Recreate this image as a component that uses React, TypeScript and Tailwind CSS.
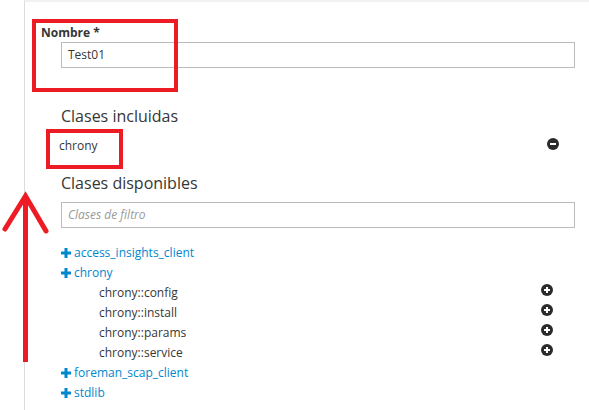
import React from "react";

const font = { fontFamily: '"Open Sans", "Liberation Sans", sans-serif' };

function PlusGlyph() {
  return (
    <svg width="10" height="10" viewBox="0 0 10 10" className="shrink-0">
      <rect x="3.5" y="0" width="3" height="10" fill="#0088ce" />
      <rect x="0" y="3.5" width="10" height="3" fill="#0088ce" />
    </svg>
  );
}

function CircleIcon({ minus }: { minus?: boolean }) {
  return (
    <svg width="12" height="12" viewBox="0 0 12 12">
      <circle cx="6" cy="6" r="6" fill="#2b2b2b" />
      <rect x="3" y="5" width="6" height="2" fill="#fff" />
      {!minus && <rect x="5" y="3" width="2" height="6" fill="#fff" />}
    </svg>
  );
}

// árbol de clases disponibles
const available: { name: string; children?: string[] }[] = [
  { name: "access_insights_client" },
  {
    name: "chrony",
    children: ["chrony::config", "chrony::install", "chrony::params", "chrony::service"],
  },
  { name: "foreman_scap_client" },
  { name: "stdlib" },
];

export default function App() {
  return (
    <div
      className="relative w-[589px] h-[410px] overflow-hidden bg-white text-[#363636]"
      style={font}
    >
      <div className="ml-[24px] h-full border-l border-[#dcdcdc] border-t-2 border-t-[#f1f1f1] pr-[14px]">
        {/* Nombre */}
        <div className="pl-[16px] pt-[22px] text-[12px] font-bold leading-[17px]">Nombre *</div>
        <div className="ml-[36px] mt-[1px] h-[26px] border border-[#bbb] px-[6px] text-[12px] leading-[24px]">
          Test01
        </div>

        {/* Clases incluidas */}
        <h3 className="ml-[36px] mt-[37px] text-[16px] leading-[22px]">Clases incluidas</h3>
        <div className="ml-[34px] mt-[10px] flex items-start justify-between text-[12px] leading-[18px]">
          <span>chrony</span>
          <span className="mr-[16px] mt-[1px] flex">
            <CircleIcon minus />
          </span>
        </div>

        {/* Clases disponibles */}
        <h3 className="ml-[36px] mt-[17px] text-[16px] leading-[22px]">Clases disponibles</h3>
        <div className="ml-[36px] mt-[8px] h-[26px] border border-[#bbb] px-[6px] text-[12px] italic leading-[24px] text-[#999]">
          Clases de filtro
        </div>

        <ul className="ml-[36px] mt-[15px] text-[12px] leading-[20px]">
          {available.map((c) => (
            <li key={c.name}>
              <div className="flex items-center gap-[3px] text-[#0088ce]">
                <PlusGlyph />
                <span>{c.name}</span>
              </div>
              {c.children?.map((ch) => (
                <div key={ch} className="flex items-start justify-between pl-[38px]">
                  <span>{ch}</span>
                  <span className="mr-[22px] mt-[1px] flex">
                    <CircleIcon />
                  </span>
                </div>
              ))}
            </li>
          ))}
        </ul>
      </div>

      {/* anotaciones rojas */}
      <div className="absolute left-[32px] top-[19px] w-[146px] h-[73px] border-[4px] border-[#ed1c24]" />
      <div className="absolute left-[46px] top-[129px] w-[77px] h-[40px] border-[4px] border-[#ed1c24]" />
      <svg className="absolute left-0 top-0" width="60" height="410">
        <line x1="25.5" y1="197" x2="25.5" y2="362" stroke="#ed1c24" strokeWidth="5" />
        <polyline
          points="5,229 25.5,196 46,231"
          fill="none"
          stroke="#ed1c24"
          strokeWidth="5"
          strokeLinecap="round"
          strokeLinejoin="miter"
        />
      </svg>
    </div>
  );
}
